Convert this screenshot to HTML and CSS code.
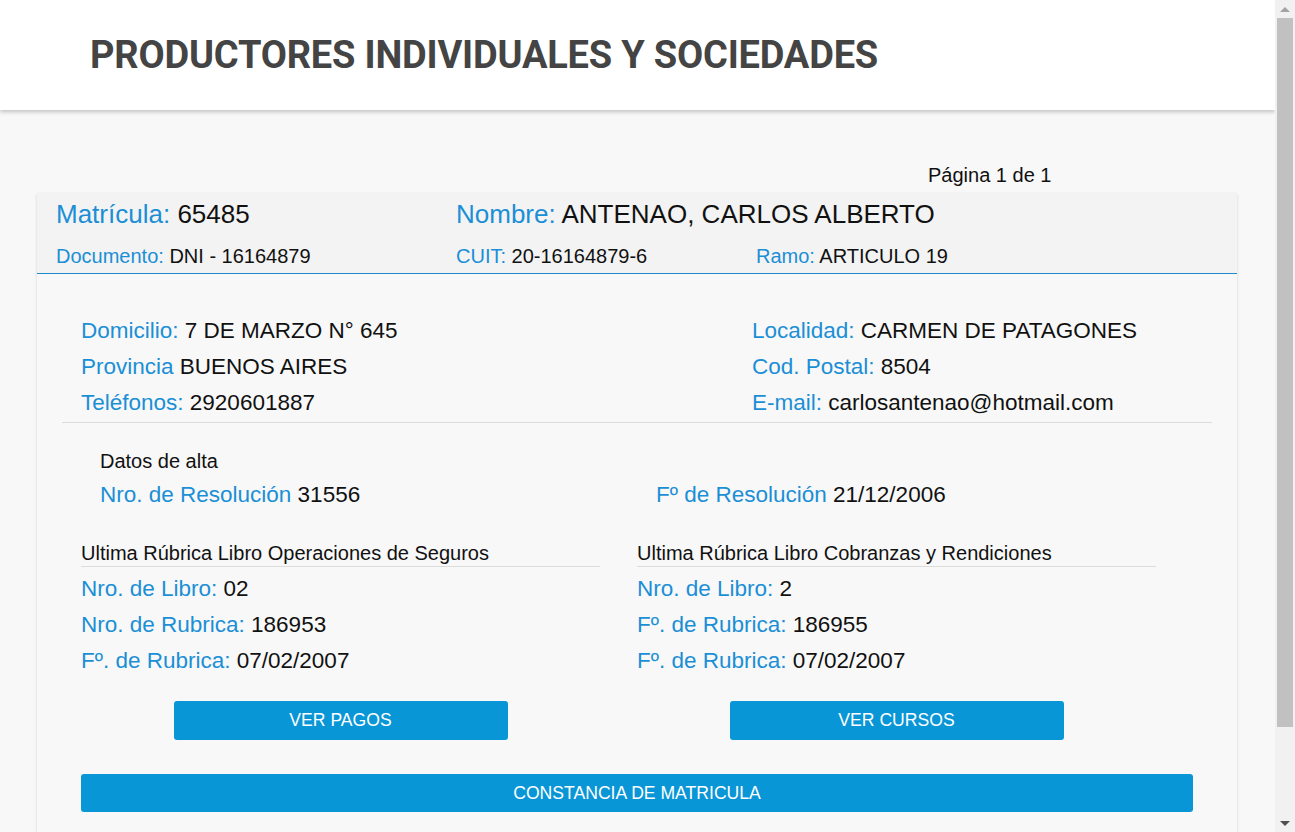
FILE: index.html
```html
<!DOCTYPE html>
<html lang="es">
<head>
<meta charset="utf-8">
<title>Productores individuales y sociedades</title>
<link rel="stylesheet" href="styles.css">
</head>
<body>
<div class="viewport">
  <div class="page">
    <header class="topbar">
      <h1 class="title">PRODUCTORES INDIVIDUALES Y SOCIEDADES</h1>
    </header>
    <main class="container">
      <div class="pager">Página 1 de 1</div>
      <section class="card">
        <div class="card-head">
          <div class="head-row big">
            <div class="c1"><span class="lbl">Matrícula:</span> 65485</div>
            <div class="c23"><span class="lbl">Nombre:</span> ANTENAO, CARLOS ALBERTO</div>
          </div>
          <div class="head-row small">
            <div class="c1"><span class="lbl">Documento:</span> DNI - 16164879</div>
            <div class="c2"><span class="lbl">CUIT:</span> 20-16164879-6</div>
            <div class="c3"><span class="lbl">Ramo:</span> ARTICULO 19</div>
          </div>
        </div>
        <div class="card-body">
          <div class="contact">
            <div class="contact-col">
              <div class="line"><span class="lbl">Domicilio:</span> 7 DE MARZO N° 645</div>
              <div class="line"><span class="lbl">Provincia</span> BUENOS AIRES</div>
              <div class="line"><span class="lbl">Teléfonos:</span> 2920601887</div>
            </div>
            <div class="contact-col">
              <div class="line"><span class="lbl">Localidad:</span> CARMEN DE PATAGONES</div>
              <div class="line"><span class="lbl">Cod. Postal:</span> 8504</div>
              <div class="line"><span class="lbl">E-mail:</span> carlosantenao@hotmail.com</div>
            </div>
          </div>
          <hr class="sep">
          <div class="alta">
            <div class="alta-title">Datos de alta</div>
            <div class="alta-row">
              <div class="line"><span class="lbl">Nro. de Resolución</span> 31556</div>
              <div class="line"><span class="lbl">Fº de Resolución</span> 21/12/2006</div>
            </div>
          </div>
          <div class="rubricas">
            <div class="rubrica">
              <div class="rub-title">Ultima Rúbrica Libro Operaciones de Seguros</div>
              <div class="line"><span class="lbl">Nro. de Libro:</span> 02</div>
              <div class="line"><span class="lbl">Nro. de Rubrica:</span> 186953</div>
              <div class="line"><span class="lbl">Fº. de Rubrica:</span> 07/02/2007</div>
              <div class="btn-wrap"><button class="btn btn-half">VER PAGOS</button></div>
            </div>
            <div class="rubrica">
              <div class="rub-title">Ultima Rúbrica Libro Cobranzas y Rendiciones</div>
              <div class="line"><span class="lbl">Nro. de Libro:</span> 2</div>
              <div class="line"><span class="lbl">Fº. de Rubrica:</span> 186955</div>
              <div class="line"><span class="lbl">Fº. de Rubrica:</span> 07/02/2007</div>
              <div class="btn-wrap"><button class="btn btn-half">VER CURSOS</button></div>
            </div>
          </div>
          <button class="btn btn-full">CONSTANCIA DE MATRICULA</button>
        </div>
      </section>
    </main>
  </div>
  <div class="scrollbar" aria-hidden="true">
    <div class="sb-btn sb-up"></div>
    <div class="sb-track">
      <div class="sb-thumb"></div>
    </div>
    <div class="sb-btn sb-down"></div>
  </div>
</div>
</body>
</html>
```
FILE: styles.css
```css
* { box-sizing: border-box; }

html, body { height: 100%; }

body {
  margin: 0;
  font-family: "Liberation Sans", Arial, sans-serif;
  color: #111;
  background: #f8f8f8;
  overflow: hidden;
}

.viewport {
  display: flex;
  height: 100vh;
}

.page {
  flex: 1;
  min-width: 0;
  overflow: hidden;
}

/* simulated browser scrollbar */
.scrollbar {
  width: 20px;
  flex: none;
  background: #f1f1f1;
  display: flex;
  flex-direction: column;
}

.sb-btn {
  height: 18px;
  flex: none;
  display: flex;
  align-items: center;
  justify-content: center;
}

.sb-btn::before {
  content: "";
  width: 0;
  height: 0;
  border-left: 5px solid transparent;
  border-right: 5px solid transparent;
}

.sb-up::before { border-bottom: 5px solid #a3a3a3; }
.sb-down::before { border-top: 5px solid #505050; }

.sb-track {
  flex: 1;
  padding: 0 2px;
}

.sb-thumb {
  height: 709px;
  background: #c1c1c1;
}

.topbar {
  background: #fff;
  height: 110px;
  box-shadow: 0 2px 4px rgba(0, 0, 0, 0.22);
  display: flex;
  align-items: center;
  padding-left: 90px;
  position: relative;
}

.title {
  margin: 0;
  font-family: Roboto, "Liberation Sans", sans-serif;
  font-weight: 700;
  font-size: 38px;
  color: #444;
  letter-spacing: -0.2px;
}

.container {
  width: 1200px;
  margin: 0 0 0 37px;
  padding-top: 53px;
  padding-bottom: 80px;
}

.pager {
  font-size: 20px;
  line-height: 24px;
  padding-left: 891px;
  margin-bottom: 6px;
}

.card {
  background: #f8f8f8;
  box-shadow: 0 1px 3px rgba(0, 0, 0, 0.16);
  border-radius: 2px;
}

.card-head {
  background: #f3f3f3;
  border-bottom: 1px solid #1f88cc;
  padding: 0 19px;
}

.head-row {
  display: grid;
  grid-template-columns: 400px 300px 1fr;
}

.head-row.big {
  font-size: 26px;
  line-height: 42px;
}

.head-row.small {
  font-size: 20px;
  line-height: 34px;
  margin-top: 4px;
}

.c23 { grid-column: 2 / 4; }

.lbl { color: #1b8fd6; }

.card-body {
  padding: 39px 44px 40px;
}

.line {
  font-size: 22.5px;
  line-height: 36px;
  white-space: nowrap;
}

.contact {
  display: grid;
  grid-template-columns: 671px 1fr;
}

.sep {
  border: 0;
  border-top: 1px solid #dcdcdc;
  margin: 1px -19px 0;
}

.alta {
  padding: 22px 19px 0;
}

.alta-title {
  font-size: 20px;
  line-height: 32px;
}

.alta-row {
  display: grid;
  grid-template-columns: 556px 1fr;
}

.rubricas {
  display: grid;
  grid-template-columns: 556px 556px;
  margin-top: 27px;
}

.rubrica {
  width: 519px;
}

.rub-title {
  font-size: 20px;
  line-height: 26px;
  border-bottom: 1px solid #dcdcdc;
  margin-bottom: 4px;
}

.btn-wrap {
  display: flex;
  justify-content: center;
  margin-top: 22px;
}

.btn {
  background: #0896d7;
  color: #fff;
  border: 0;
  border-radius: 3px;
  font-family: "Liberation Sans", Arial, sans-serif;
  font-size: 17.6px;
  cursor: pointer;
}

.btn-half {
  width: 334px;
  height: 39px;
}

.btn-full {
  display: block;
  width: 100%;
  height: 38px;
  margin-top: 34px;
}
```
